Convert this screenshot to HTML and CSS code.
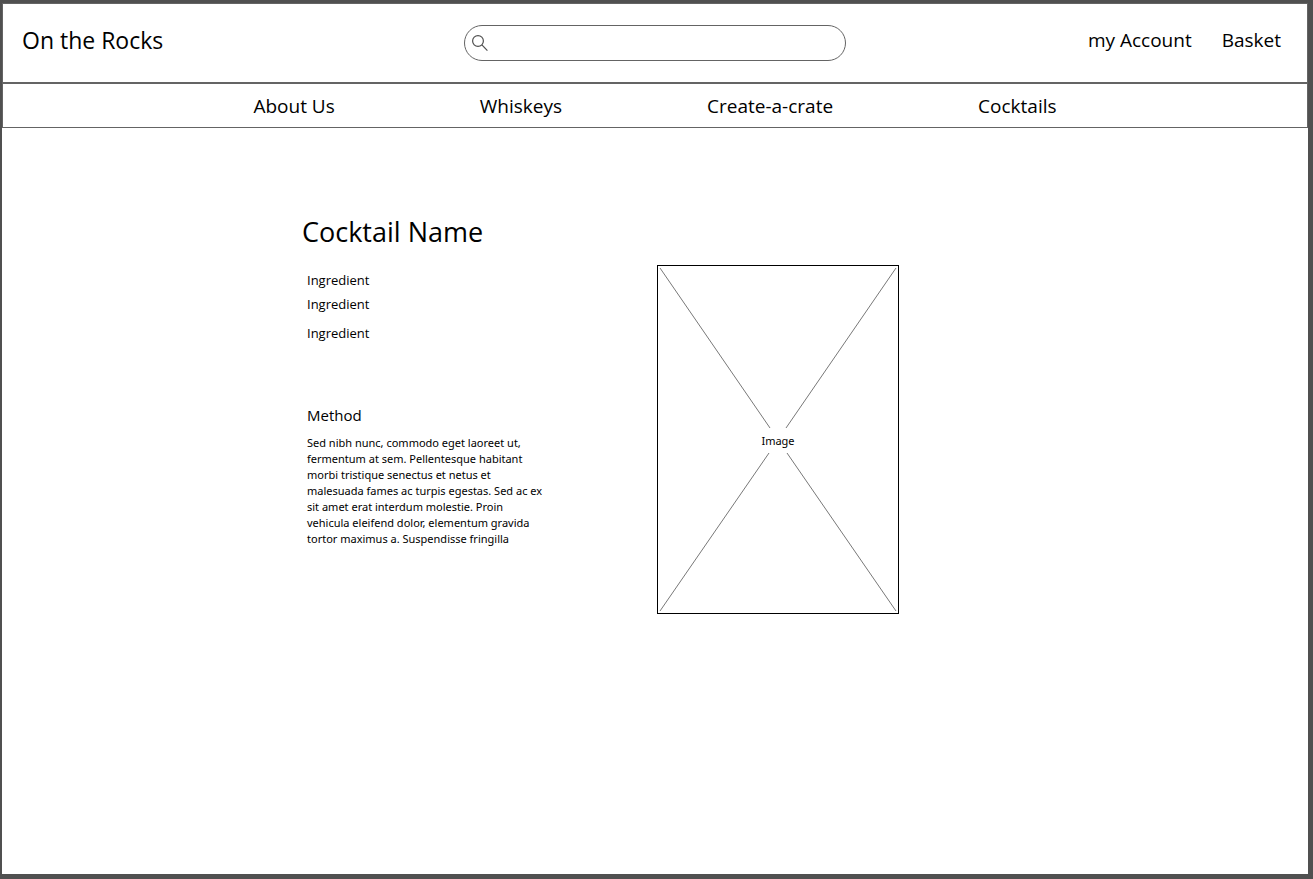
FILE: index.html
```html
<!DOCTYPE html>
<html lang="en">
<head>
<meta charset="utf-8">
<meta name="viewport" content="width=device-width, initial-scale=1">
<title>On the Rocks</title>
<link rel="stylesheet" href="styles.css">
</head>
<body>
<div class="page">
  <header class="header">
    <a class="brand" href="#">On the Rocks</a>
    <form class="search" role="search">
      <svg class="search-icon" viewBox="0 0 16 16" aria-hidden="true"><circle cx="6" cy="6" r="5.4"/><path d="M9.9 9.9 15.4 15.6"/></svg>
      <input class="search-input" type="search" aria-label="Search">
    </form>
    <div class="account">
      <a href="#">my Account</a>
      <a href="#">Basket</a>
    </div>
  </header>
  <nav class="nav">
    <a href="#">About Us</a>
    <a href="#">Whiskeys</a>
    <a href="#">Create-a-crate</a>
    <a href="#">Cocktails</a>
  </nav>
  <main class="main">
    <section class="recipe">
      <h1 class="title">Cocktail Name</h1>
      <ul class="ingredients">
        <li>Ingredient</li>
        <li>Ingredient</li>
        <li class="last">Ingredient</li>
      </ul>
      <h2 class="subtitle">Method</h2>
      <p class="method">Sed nibh nunc, commodo eget laoreet ut,<br>fermentum at sem. Pellentesque habitant<br>morbi tristique senectus et netus et<br>malesuada fames ac turpis egestas. Sed ac ex<br>sit amet erat interdum molestie. Proin<br>vehicula eleifend dolor, elementum gravida<br>tortor maximus a. Suspendisse fringilla</p>
    </section>
    <figure class="picture">
      <svg class="cross" viewBox="0 0 240 347" preserveAspectRatio="none" aria-hidden="true"><path d="M2 2 112 162M238 2 128 162M2 345 111 187M238 345 129 187"/></svg>
      <figcaption class="caption">Image</figcaption>
    </figure>
  </main>
</div>
</body>
</html>
```
FILE: styles.css
```css
* {
  box-sizing: border-box;
}

body {
  margin: 0;
  background: #505050;
  color: #000;
  font-family: "Open Sans", "Noto Sans", sans-serif;
  font-size: 19px;
  line-height: 28px;
}

a {
  color: inherit;
  text-decoration: none;
  white-space: nowrap;
}

.page {
  min-height: 100vh;
  border: solid #505050;
  border-width: 3px 5px 5px 2px;
  background: #fff;
}

.header {
  display: grid;
  grid-template-columns: 1fr minmax(0, 382px) 1fr;
  align-items: start;
  padding: 21px 19px;
  border: 1px solid #646464;
}

.brand {
  font-size: 23px;
  line-height: 30px;
}

.search {
  display: flex;
  align-items: center;
  gap: 8px;
  height: 36px;
  padding: 0 16px 0 7px;
  border: 1px solid #646464;
  border-radius: 18px;
}

.search-icon {
  flex: none;
  width: 16px;
  height: 16px;
  fill: none;
  stroke: #505050;
  stroke-width: 1.2;
}

.search-input {
  flex: 1;
  min-width: 0;
  border: 0;
  outline: 0;
  background: none;
  font: inherit;
}

.account {
  display: flex;
  justify-content: flex-end;
  gap: 30px;
  padding: 1px 7px 0 0;
}

.nav {
  display: flex;
  justify-content: center;
  gap: 20px 145px;
  padding: 8px 0 7px;
  border: 1px solid #646464;
}

.main {
  display: grid;
  grid-template-columns: 355px 242px;
  align-items: start;
  padding: 84px 0 0 300px;
}

.title {
  margin: 0;
  font-size: 27px;
  font-weight: 400;
  line-height: 40px;
}

.ingredients {
  margin: 0;
  padding: 16px 5px 0;
  font-size: 13px;
  line-height: 24px;
  list-style: none;
}

.last {
  margin-top: 5px;
}

.subtitle {
  margin: 58px 5px 8px;
  font-size: 15px;
  font-weight: 400;
  line-height: 24px;
}

.method {
  margin: 0 5px;
  font-family: "Noto Sans", "Open Sans", sans-serif;
  font-size: 11px;
  line-height: 16px;
}

.picture {
  display: grid;
  place-items: center;
  margin: 53px 0 0;
  border: 1px solid #000;
}

.cross {
  grid-area: 1 / 1;
  width: 100%;
  fill: none;
  stroke: #787878;
}

.caption {
  grid-area: 1 / 1;
  padding-top: 2px;
  font-family: "Noto Sans", "Open Sans", sans-serif;
  font-size: 11px;
  line-height: 16px;
}
```
